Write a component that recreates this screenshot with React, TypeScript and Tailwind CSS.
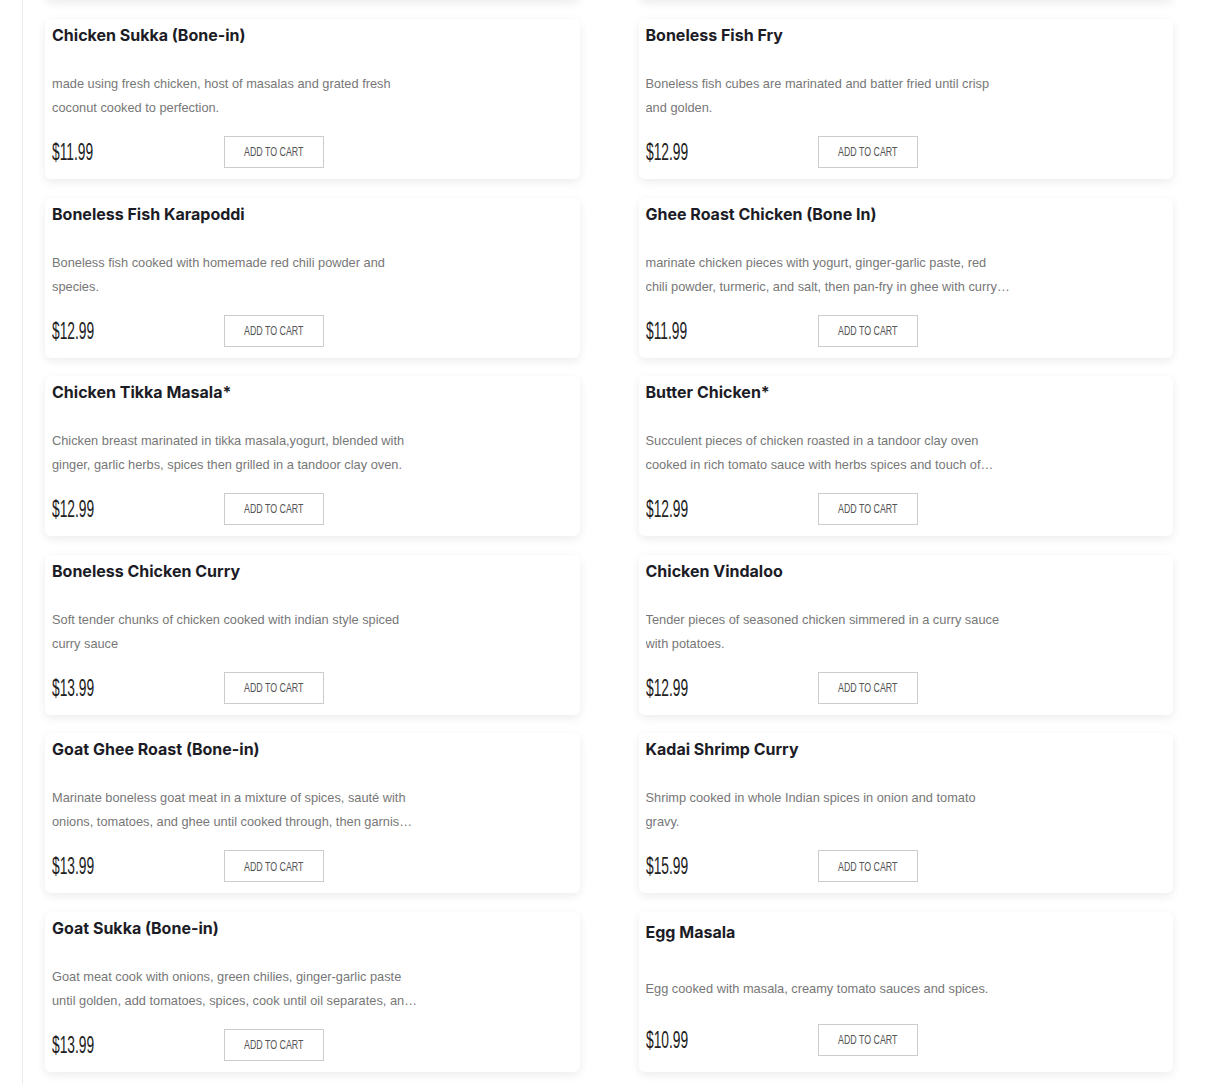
import React from "react";

interface Dish {
  name: string;
  desc: string;
  price: string;
  single?: boolean;
}

const rows: [Dish, Dish][] = [
  [
    {
      name: "Chicken Sukka (Bone-in)",
      desc: "made using fresh chicken, host of masalas and grated fresh coconut cooked to perfection.",
      price: "$11.99",
    },
    {
      name: "Boneless Fish Fry",
      desc: "Boneless fish cubes are marinated and batter fried until crisp and golden.",
      price: "$12.99",
    },
  ],
  [
    {
      name: "Boneless Fish Karapoddi",
      desc: "Boneless fish cooked with homemade red chili powder and species.",
      price: "$12.99",
    },
    {
      name: "Ghee Roast Chicken (Bone In)",
      desc: "marinate chicken pieces with yogurt, ginger-garlic paste, red chili powder, turmeric, and salt, then pan-fry in ghee with curry leaves until roasted.",
      price: "$11.99",
    },
  ],
  [
    {
      name: "Chicken Tikka Masala*",
      desc: "Chicken breast marinated in tikka masala,yogurt, blended with ginger, garlic herbs, spices then grilled in a tandoor clay oven.",
      price: "$12.99",
    },
    {
      name: "Butter Chicken*",
      desc: "Succulent pieces of chicken roasted in a tandoor clay oven cooked in rich tomato sauce with herbs spices and touch of cream.",
      price: "$12.99",
    },
  ],
  [
    {
      name: "Boneless Chicken Curry",
      desc: "Soft tender chunks of chicken cooked with indian style spiced curry sauce",
      price: "$13.99",
    },
    {
      name: "Chicken Vindaloo",
      desc: "Tender pieces of seasoned chicken simmered in a curry sauce with potatoes.",
      price: "$12.99",
    },
  ],
  [
    {
      name: "Goat Ghee Roast (Bone-in)",
      desc: "Marinate boneless goat meat in a mixture of spices, sauté with onions, tomatoes, and ghee until cooked through, then garnish with coriander.",
      price: "$13.99",
    },
    {
      name: "Kadai Shrimp Curry",
      desc: "Shrimp cooked in whole Indian spices in onion and tomato gravy.",
      price: "$15.99",
    },
  ],
  [
    {
      name: "Goat Sukka (Bone-in)",
      desc: "Goat meat cook with onions, green chilies, ginger-garlic paste until golden, add tomatoes, spices, cook until oil separates, and finish with coconut.",
      price: "$13.99",
    },
    {
      name: "Egg Masala",
      desc: "Egg cooked with masala, creamy tomato sauces and spices.",
      price: "$10.99",
      single: true,
    },
  ],
];

function DishCard({ dish }: { dish: Dish }) {
  return (
    <div className="h-[160px] rounded-md bg-white px-[7px] shadow-[0_3px_10px_rgba(0,0,0,0.08)] flex flex-col">
      <h3
        className={`text-[16px] leading-[24px] font-bold text-[#1c1c26] ${
          dish.single ? "pt-[8px]" : "pt-[4px]"
        }`}
        style={{ fontFamily: "Inter, 'Noto Sans', sans-serif" }}
      >
        {dish.name}
      </h3>
      <p
        className={`w-[365px] text-[12.8px] leading-[24px] text-[#777] line-clamp-2 ${
          dish.single ? "mt-[33px]" : "mt-[25px] h-[48px]"
        }`}
        style={{ fontFamily: "'Liberation Sans', Arial, sans-serif" }}
      >
        {dish.desc}
      </p>
      <div className={`flex items-center ${dish.single ? "mt-[23px]" : "mt-[16px]"}`}>
        <div className="w-[172px] h-[32px] flex items-center">
          {/* condensed look: stretched sans squeezed sideways */}
          <span
            className="inline-block origin-left scale-x-[0.6] text-[23px] leading-[32px] text-[#222]"
            style={{ fontFamily: "'Liberation Sans', Arial, sans-serif" }}
          >
            {dish.price}
          </span>
        </div>
        <button className="w-[100px] h-[32px] border border-[#cccccc] bg-white flex items-center justify-center">
          <span
            className="inline-block scale-x-[0.68] text-[13px] text-[#555] whitespace-nowrap"
            style={{ fontFamily: "'Liberation Sans', Arial, sans-serif" }}
          >
            ADD TO CART
          </span>
        </button>
      </div>
    </div>
  );
}

// cards scrolled past the top / bottom edge, only the shadow shows
function EdgeCard() {
  return <div className="h-[160px] rounded-md bg-white shadow-[0_3px_10px_rgba(0,0,0,0.08)]" />;
}

export default function App() {
  return (
    <div className="h-[1084px] bg-white overflow-hidden">
      <div className="ml-[22px] border-l border-[#ebebeb] pl-[22px] pr-[33px] h-full flow-root">
        <div className="grid grid-cols-2 gap-x-[59px] gap-y-[18.6px] -mt-[159.6px]">
          <EdgeCard />
          <EdgeCard />
          {rows.map((row, i) => (
            <React.Fragment key={i}>
              <DishCard dish={row[0]} />
              <DishCard dish={row[1]} />
            </React.Fragment>
          ))}
          <div />
          <EdgeCard />
        </div>
      </div>
    </div>
  );
}
